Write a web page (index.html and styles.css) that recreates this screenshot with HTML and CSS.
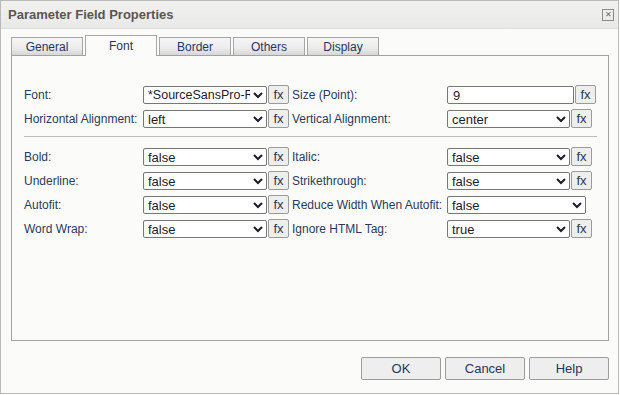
FILE: index.html
```html
<!DOCTYPE html>
<html lang="en">
<head>
    <meta charset="UTF-8">
    <title>Parameter Field Properties</title>
    <link rel="stylesheet" href="styles.css">
</head>
<body>
    <div class="dialog">
        <div class="title-bar">
            <span class="title">Parameter Field Properties</span>
            <span class="close">&#x2715;</span>
        </div>

        <div class="dialog-body">
            <div class="tabs">
                <div class="tab">General</div>
                <div class="tab active">Font</div>
                <div class="tab">Border</div>
                <div class="tab">Others</div>
                <div class="tab">Display</div>
            </div>

            <div class="panel">
                <div class="row">
                    <label class="label left">Font:</label>
                    <select class="field narrow-text">
                        <option>*SourceSansPro-Regular</option>
                    </select>
                    <button class="fx">fx</button>
                    <label class="label right">Size (Point):</label>
                    <input type="text" class="field text" value="9">
                    <button class="fx">fx</button>
                </div>
                <div class="row">
                    <label class="label left">Horizontal Alignment:</label>
                    <select class="field"><option>left</option></select>
                    <button class="fx">fx</button>
                    <label class="label right">Vertical Alignment:</label>
                    <select class="field"><option>center</option></select>
                    <button class="fx">fx</button>
                </div>

                <hr class="divider">

                <div class="row">
                    <label class="label left">Bold:</label>
                    <select class="field"><option>false</option></select>
                    <button class="fx">fx</button>
                    <label class="label right">Italic:</label>
                    <select class="field"><option>false</option></select>
                    <button class="fx">fx</button>
                </div>
                <div class="row">
                    <label class="label left">Underline:</label>
                    <select class="field"><option>false</option></select>
                    <button class="fx">fx</button>
                    <label class="label right">Strikethrough:</label>
                    <select class="field"><option>false</option></select>
                    <button class="fx">fx</button>
                </div>
                <div class="row">
                    <label class="label left">Autofit:</label>
                    <select class="field"><option>false</option></select>
                    <button class="fx">fx</button>
                    <label class="label right">Reduce Width When Autofit:</label>
                    <select class="field wide"><option>false</option></select>
                </div>
                <div class="row">
                    <label class="label left">Word Wrap:</label>
                    <select class="field"><option>false</option></select>
                    <button class="fx">fx</button>
                    <label class="label right">Ignore HTML Tag:</label>
                    <select class="field"><option>true</option></select>
                    <button class="fx">fx</button>
                </div>
            </div>

            <div class="actions">
                <button class="action">OK</button>
                <button class="action">Cancel</button>
                <button class="action">Help</button>
            </div>
        </div>
    </div>
</body>
</html>
```

FILE: styles.css
```css
body {
    margin: 0;
    background-color: #ffffff;
    font-family: 'Liberation Sans', Arial, sans-serif;
}

.dialog {
    width: 619px;
    height: 394px;
    box-sizing: border-box;
    border: 1px solid #b9bab8;
    background-color: #fbfcfa;
    display: flex;
    flex-direction: column;
}

.title-bar {
    height: 27px;
    flex-shrink: 0;
    display: flex;
    align-items: center;
    justify-content: space-between;
    padding: 0 4px 0 7px;
    background: linear-gradient(#f1f2f0, #e9eae8);
    border-bottom: 1px solid #dcdddb;
}

.title {
    font-size: 13px;
    font-weight: bold;
    color: #5b5552;
}

.close {
    width: 10px;
    height: 10px;
    border: 1px solid #8a8a8a;
    font-size: 8px;
    line-height: 10px;
    text-align: center;
    color: #6a6a6a;
    margin-top: 1px;
}

.dialog-body {
    flex: 1;
    display: flex;
    flex-direction: column;
    padding: 6px 9px 0 10px;
}

.tabs {
    display: flex;
    align-items: flex-end;
    gap: 2px;
    height: 20px;
    position: relative;
    z-index: 1;
}

.tab {
    width: 70px;
    height: 17px;
    box-sizing: content-box;
    border: 1px solid #a6a6a6;
    border-bottom: none;
    background: linear-gradient(#f6f6f6 0%, #ececec 60%, #d6d6d6 100%);
    font-size: 12px;
    line-height: 18px;
    text-align: center;
    color: #1f3565;
}

.tab.active {
    height: 20px;
    line-height: 21px;
    background: #fbfcfa;
    margin-bottom: -1px;
}

.panel {
    height: 286px;
    box-sizing: border-box;
    border: 1px solid #a2a2a2;
    padding: 30px 11px 0 12px;
    display: flex;
    flex-direction: column;
    gap: 6px;
}

.row {
    display: flex;
    align-items: center;
    height: 18px;
}

.label {
    font-size: 12px;
    color: #283a5e;
    white-space: nowrap;
}

.label.left {
    width: 119px;
}

.label.right {
    width: 155px;
    margin-left: 3px;
}

.field {
    width: 124px;
    height: 18px;
    box-sizing: border-box;
    border: 1px solid #767676;
    border-radius: 2px;
    background-color: #ffffff;
    font-family: 'Liberation Sans', Arial, sans-serif;
    font-size: 13px;
    color: #1c1c2a;
    padding: 0;
    margin: 0;
}

.field.narrow-text {
    font-size: 12.5px;
}

.row .label.right + .field {
    width: 123px;
}

.row .label.right + .field.text {
    width: 127px;
    padding-left: 5px;
}

.row .label.right + .field.wide {
    width: 139px;
}

.fx {
    width: 21px;
    height: 19px;
    margin: -2px 0 0 1px;
    padding: 0;
    border: 1px solid #9a9a9a;
    border-radius: 2px;
    background-color: #eeefed;
    font-family: 'Liberation Sans', Arial, sans-serif;
    font-size: 13px;
    line-height: 15px;
    color: #2a3550;
}

.divider {
    border: none;
    border-top: 1px solid #bdbdbd;
    margin: 2px 0 5px 0;
    height: 0;
}

.actions {
    display: flex;
    justify-content: flex-end;
    gap: 4px;
    margin-top: 16px;
}

.action {
    width: 80px;
    height: 23px;
    border: 1px solid #9c9c9c;
    border-radius: 2px;
    background-color: #eeeeee;
    font-family: 'Liberation Sans', Arial, sans-serif;
    font-size: 13px;
    color: #23375f;
}
```
